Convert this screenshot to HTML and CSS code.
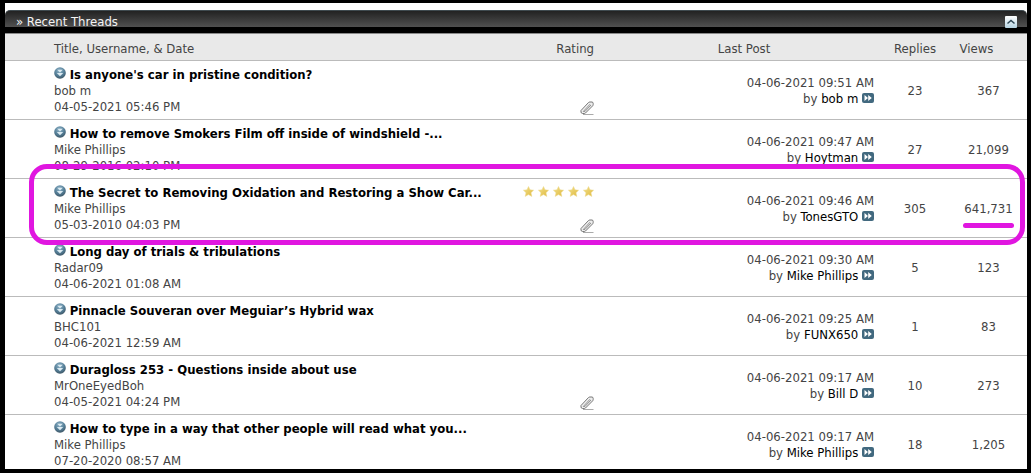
FILE: index.html
```
<!DOCTYPE html>
<html lang="en">
<head>
<meta charset="utf-8">
<title>Recent Threads</title>
<link rel="stylesheet" href="styles.css">
</head>
<body>
<svg class="symbols" aria-hidden="true">
  <defs>
    <radialGradient id="ball" cx="45%" cy="30%" r="70%">
      <stop offset="0" stop-color="#8fb3c8"/><stop offset=".6" stop-color="#557f98"/><stop offset="1" stop-color="#3c5565"/>
    </radialGradient>
    <linearGradient id="gold" x1="0" y1="0" x2="1" y2="1">
      <stop offset="0" stop-color="#f3e08a"/><stop offset="1" stop-color="#dfb93f"/>
    </linearGradient>
    <symbol id="thread" viewBox="0 0 12 12">
      <circle cx="6" cy="6" r="5.800" fill="url(#ball)"/>
      <path d="M3.200 2.800h5.600L6 5.400zM2.800 6h6.400L6 9.200z" fill="#dcebf2"/>
    </symbol>
    <symbol id="last" viewBox="0 0 12 10">
      <rect width="12" height="10" rx="2" fill="#42697f"/>
      <path d="M2.500 2 6 5 2.500 8zM6.200 2 9.800 5 6.200 8z" fill="#fff"/>
    </symbol>
    <symbol id="star" viewBox="0 0 11 11">
      <path d="M5.500.5 7 3.800l3.600.4L8 6.700l.8 3.700-3.300-1.800-3.300 1.800L3 6.700.4 4.200 4 3.800z" fill="url(#gold)" stroke="#ecd98c" stroke-width=".5"/>
    </symbol>
    <symbol id="clip" viewBox="0 0 14 14">
      <path d="M3 13.500h10.500" stroke="#aaa"/>
      <path d="M1 9.500 8.500 1.500Q9 1 10 1h2q1.300.2 1.200 1.500v1q0 .7-.6 1.400L5.500 12q-.6.500-1.300.5H2.500Q1 12.300 1 11z" fill="#eee" stroke="#777"/>
      <path d="M3.300 10.500 10 3.200M3.300 10.500h1.600L11 4" stroke="#888" stroke-width=".900" fill="none"/>
    </symbol>
  </defs>
</svg>
<main class="panel">
  <header class="bar">
    <h1 class="bar-title">» Recent Threads</h1>
    <button class="collapse" type="button" aria-label="Collapse">
      <svg viewBox="0 0 12 12" width="12" height="12"><path d="M2.500 7.500 6 4.500l3.500 3" fill="none" stroke="#2d4654" stroke-width="1.500"/></svg>
    </button>
  </header>
  <table class="threads">
    <thead>
      <tr><th class="title">Title, Username, &amp; Date</th><th class="rating">Rating</th><th class="last">Last Post</th><th class="replies">Replies</th><th class="views">Views</th></tr>
    </thead>
    <tbody>
      <tr>
        <td class="title"><svg class="ball"><use href="#thread"/></svg> <a class="subject" href="#">Is anyone's car in pristine condition?</a><br>bob m<br>04-05-2021 05:46 PM</td>
        <td class="rating"><svg class="clip"><use href="#clip"/></svg></td>
        <td class="last">04-06-2021 09:51 AM<br>by <a href="#">bob m</a> <svg class="go"><use href="#last"/></svg></td>
        <td class="replies">23</td><td class="views">367</td>
      </tr>
      <tr>
        <td class="title"><svg class="ball"><use href="#thread"/></svg> <a class="subject" href="#">How to remove Smokers Film off inside of windshield -...</a><br>Mike Phillips<br>08-29-2016 02:10 PM</td>
        <td class="rating"></td>
        <td class="last">04-06-2021 09:47 AM<br>by <a href="#">Hoytman</a> <svg class="go"><use href="#last"/></svg></td>
        <td class="replies">27</td><td class="views">21,099</td>
      </tr>
      <tr class="marked">
        <td class="title"><svg class="ball"><use href="#thread"/></svg> <a class="subject" href="#">The Secret to Removing Oxidation and Restoring a Show Car...</a><br>Mike Phillips<br>05-03-2010 04:03 PM</td>
        <td class="rating"><span class="stars"><svg class="star"><use href="#star"/></svg><svg class="star"><use href="#star"/></svg><svg class="star"><use href="#star"/></svg><svg class="star"><use href="#star"/></svg><svg class="star"><use href="#star"/></svg></span><svg class="clip"><use href="#clip"/></svg></td>
        <td class="last">04-06-2021 09:46 AM<br>by <a href="#">TonesGTO</a> <svg class="go"><use href="#last"/></svg></td>
        <td class="replies">305</td><td class="views"><span class="underlined">641,731</span></td>
      </tr>
      <tr>
        <td class="title"><svg class="ball"><use href="#thread"/></svg> <a class="subject" href="#">Long day of trials &amp; tribulations</a><br>Radar09<br>04-06-2021 01:08 AM</td>
        <td class="rating"></td>
        <td class="last">04-06-2021 09:30 AM<br>by <a href="#">Mike Phillips</a> <svg class="go"><use href="#last"/></svg></td>
        <td class="replies">5</td><td class="views">123</td>
      </tr>
      <tr>
        <td class="title"><svg class="ball"><use href="#thread"/></svg> <a class="subject" href="#">Pinnacle Souveran over Meguiar’s Hybrid wax</a><br>BHC101<br>04-06-2021 12:59 AM</td>
        <td class="rating"></td>
        <td class="last">04-06-2021 09:25 AM<br>by <a href="#">FUNX650</a> <svg class="go"><use href="#last"/></svg></td>
        <td class="replies">1</td><td class="views">83</td>
      </tr>
      <tr>
        <td class="title"><svg class="ball"><use href="#thread"/></svg> <a class="subject" href="#">Duragloss 253 - Questions inside about use</a><br>MrOneEyedBoh<br>04-05-2021 04:24 PM</td>
        <td class="rating"><svg class="clip"><use href="#clip"/></svg></td>
        <td class="last">04-06-2021 09:17 AM<br>by <a href="#">Bill D</a> <svg class="go"><use href="#last"/></svg></td>
        <td class="replies">10</td><td class="views">273</td>
      </tr>
      <tr>
        <td class="title"><svg class="ball"><use href="#thread"/></svg> <a class="subject" href="#">How to type in a way that other people will read what you...</a><br>Mike Phillips<br>07-20-2020 08:57 AM</td>
        <td class="rating"></td>
        <td class="last">04-06-2021 09:17 AM<br>by <a href="#">Mike Phillips</a> <svg class="go"><use href="#last"/></svg></td>
        <td class="replies">18</td><td class="views">1,205</td>
      </tr>
    </tbody>
  </table>
</main>
</body>
</html>
```
FILE: styles.css
```
* { box-sizing: border-box; }

body {
  margin: 0;
  padding: 3px 4px 4px 5px;
  background: #000;
  color: #444;
  font: 13px/16px "DejaVu Sans Condensed", "Noto Sans", sans-serif;
}

.symbols { position: absolute; width: 0; height: 0; }

.panel { padding-top: 7px; background: #fff; }

.bar {
  display: flex;
  align-items: center;
  justify-content: space-between;
  height: 24px;
  padding: 0 10px 0 11px;
  border-top: 1px solid #3f4a4f;
  border-bottom: 1px solid #8a8a8a;
  border-radius: 5px 5px 0 0;
  background: linear-gradient(#222, #505050 16px, #000 16px);
}

.bar-title { margin: 0; color: #f4f4f4; font-size: 13px; font-weight: normal; }

.collapse {
  display: flex;
  padding: 0;
  border: 0;
  border-radius: 1px;
  background: linear-gradient(#fff, #b5d3e2);
}

.threads { width: 100%; border-collapse: collapse; table-layout: fixed; }

th, td { padding: 6px 0 4px; border-bottom: 1px solid #bbb; font-weight: normal; }
th { padding: 7px 0 3px; background: #e9e9e9; }
tbody tr:last-child td { padding-bottom: 0; border-bottom: 0; }

.title { padding-left: 49px; text-align: left; white-space: nowrap; }
.rating { width: 100px; padding-right: 14px; text-align: right; }
.last { width: 272px; padding-right: 6px; text-align: right; }
.replies { width: 70px; text-align: center; }
.views { width: 77px; text-align: center; }

th.last { padding-right: 0; text-align: center; }
th.views { padding-right: 24px; }

a { color: #000; text-decoration: none; }
.subject { font-weight: bold; }

.ball { width: 12px; height: 12px; vertical-align: 0; }
.go { width: 12px; height: 10px; }

td.rating { vertical-align: bottom; }
.stars { display: flex; justify-content: flex-end; gap: 4px; margin-bottom: 22px; }
.star { width: 11px; height: 11px; }
.clip { display: block; width: 14px; height: 14px; margin-left: auto; }

/* Marker drawn over the highlighted thread */
.marked { position: relative; }
.marked .title::after {
  content: "";
  position: absolute;
  inset: -15px 2px -7px 24px;
  border: 5px solid #e016e0;
  border-radius: 18px;
  pointer-events: none;
}

.underlined { position: relative; }
.underlined::after {
  content: "";
  position: absolute;
  inset: auto -1px -12px;
  height: 5px;
  border-radius: 3px;
  background: #e016e0;
}
```
